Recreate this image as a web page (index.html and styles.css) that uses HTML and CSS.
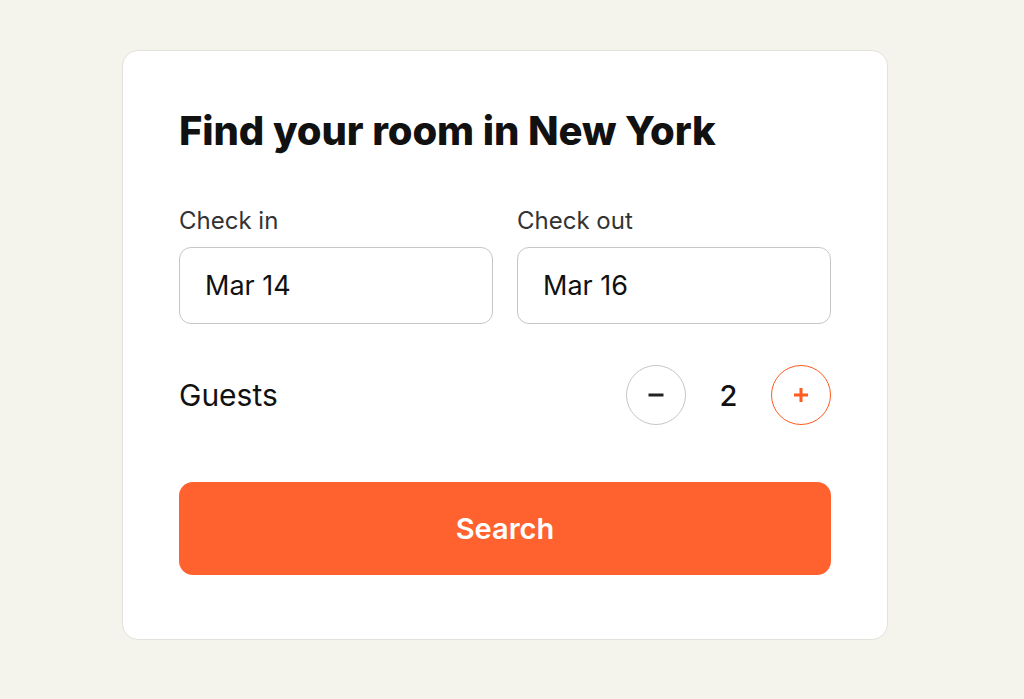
FILE: index.html
```html
<!DOCTYPE html>
<html>
<head>
    <meta charset="UTF-8">
    <title>Find your room</title>
    <link rel="stylesheet" href="styles.css">
</head>
<body>
<div class="booking-card">
    <h1 class="title">Find your room in New York</h1>
    <div class="dates"><!-- Dates -->
        <label class="field">
            <span class="field-label">Check in</span>
            <span class="field-input">Mar 14</span>
        </label>
        <label class="field">
            <span class="field-label">Check out</span>
            <span class="field-input">Mar 16</span>
        </label>
    </div>
    <div class="guests"><!-- Guests -->
        <span class="guests-label">Guests</span>
        <div class="stepper">
            <button class="step-button minus" onclick="change(-1)">
                <svg width="18" height="18" viewBox="0 0 18 18"><path d="M1.5 9h15" stroke="#222" stroke-width="3"/></svg>
            </button>
            <span id="guestCount" class="count">2</span>
            <button class="step-button plus" onclick="change(1)">
                <svg width="18" height="18" viewBox="0 0 18 18"><path d="M2 9h14M9 2v14" stroke="#ff5a1f" stroke-width="3"/></svg>
            </button>
        </div>
    </div>
    <button class="search-button">Search</button>
</div>

<script>
    var guests = 2;

    function change(delta) {
        guests = Math.max(1, guests + delta);
        document.getElementById("guestCount").innerHTML = guests;
    }
</script>
</body>
</html>
```

FILE: styles.css
```css
body {
    margin: 0;
    background-color: #f4f3ec;
    font-family: Inter, "Noto Sans", sans-serif;
    color: #111;
}

/* Card */
.booking-card {
    box-sizing: border-box;
    width: 766px;
    margin: 50px 0 0 122px;
    padding: 56px 56px 64px;
    background-color: white;
    border: 1px solid #e2e1dc;
    border-radius: 16px;
}

.title {
    margin: 0 0 52px;
    font-size: 40px;
    font-weight: 800;
    letter-spacing: -0.1px;
    line-height: 48px;
}

/* Dates */
.dates {
    display: grid;
    grid-template-columns: 1fr 1fr;
    gap: 24px;
}

.field {
    display: flex;
    flex-direction: column;
    gap: 12px;
}

.field-label {
    font-size: 24px;
    line-height: 28px;
    color: #333;
}

.field-input {
    box-sizing: border-box;
    height: 77px;
    padding: 0 25px;
    display: flex;
    align-items: center;
    font-size: 27px;
    border: 1px solid #c6c6c6;
    border-radius: 12px;
}

/* Guests */
.guests {
    display: flex;
    align-items: center;
    justify-content: space-between;
    margin-top: 41px;
}

.guests-label {
    font-size: 30px;
}

.stepper {
    display: flex;
    align-items: center;
    gap: 24px;
}

.step-button {
    width: 60px;
    height: 60px;
    padding: 0;
    display: flex;
    align-items: center;
    justify-content: center;
    background: white;
    border-radius: 50%;
    cursor: pointer;
}

.minus {
    border: 1px solid #c6c6c6;
}

.plus {
    border: 1.5px solid #ff5a1f;
}

.count {
    width: 37px;
    text-align: center;
    font-size: 29px;
    font-weight: 500;
}

/* Search */
.search-button {
    width: 100%;
    height: 93px;
    margin-top: 57px;
    font-family: inherit;
    font-size: 29px;
    font-weight: 600;
    color: white;
    background-color: #ff622f;
    border: none;
    border-radius: 14px;
    cursor: pointer;
}
```
